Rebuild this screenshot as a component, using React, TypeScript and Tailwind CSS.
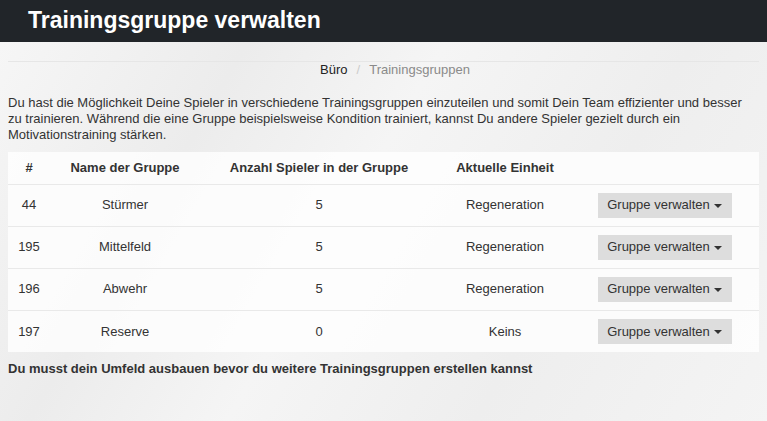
const rows = [
  { id: 44, name: "Stürmer", count: 5, unit: "Regeneration" },
  { id: 195, name: "Mittelfeld", count: 5, unit: "Regeneration" },
  { id: 196, name: "Abwehr", count: 5, unit: "Regeneration" },
  { id: 197, name: "Reserve", count: 0, unit: "Keins" },
];

function Caret() {
  return <span className="ml-1 inline-block h-0 w-0 border-x-[4px] border-t-[4px] border-x-transparent border-t-[#333] align-middle" />;
}

export default function App() {
  return (
    <div
      className="min-h-[421px] bg-[#f2f2f2] text-[13px] text-[#333]"
      style={{ fontFamily: '"Liberation Sans", Arial, sans-serif' }}
    >
      <div className="h-[42px] bg-[#212529] pl-[28px] pt-[6px]">
        <h1 className="text-[23px] font-bold leading-[28px] text-white">Trainingsgruppe verwalten</h1>
      </div>

      <div className="bg-[linear-gradient(120deg,#f6f6f6_0%,#ececec_25%,#f5f5f5_45%,#eeeeee_70%,#f4f4f4_100%)] px-[8px] pb-[50px] pt-[19px]">
        <div className="border-t border-[#e6e6e6] pr-[1px]" />
        <div className="flex justify-center gap-[9px] pl-[23px] leading-[16px]">
          <span className="text-[#222]">Büro</span>
          <span className="text-[#ccc]">/</span>
          <span className="text-[#8a8a8a]">Trainingsgruppen</span>
        </div>

        <p className="mt-[17px] pr-[10px] leading-[16px]">
          Du hast die Möglichkeit Deine Spieler in verschiedene Trainingsgruppen einzuteilen und somit Dein Team effizienter und besser zu trainieren. Während die eine Gruppe beispielsweise Kondition trainiert, kannst Du andere Spieler gezielt durch ein Motivationstraining stärken.
        </p>

        <table className="mt-[9px] w-full border-collapse bg-white/80 text-center">
          <thead>
            <tr className="h-[32px] border-b border-[#e9e9e9] font-bold">
              <th className="w-[42px]">#</th>
              <th className="w-[150px]">Name der Gruppe</th>
              <th className="w-[238px]">Anzahl Spieler in der Gruppe</th>
              <th className="w-[134px]">Aktuelle Einheit</th>
              <th></th>
            </tr>
          </thead>
          <tbody>
            {rows.map((r, i) => (
              <tr key={r.id} className={`h-[42px] ${i < rows.length - 1 ? "border-b border-[#e9e9e9]" : ""}`}>
                <td>{r.id}</td>
                <td>{r.name}</td>
                <td>{r.count}</td>
                <td>{r.unit}</td>
                <td>
                  <button className="ml-[-2px] h-[25px] w-[134px] bg-[#dddddd] text-[13px] text-[#333]">
                    Gruppe verwalten
                    <Caret />
                  </button>
                </td>
              </tr>
            ))}
          </tbody>
        </table>

        <p className="mt-[7px] font-bold">Du musst dein Umfeld ausbauen bevor du weitere Trainingsgruppen erstellen kannst</p>
      </div>
    </div>
  );
}
